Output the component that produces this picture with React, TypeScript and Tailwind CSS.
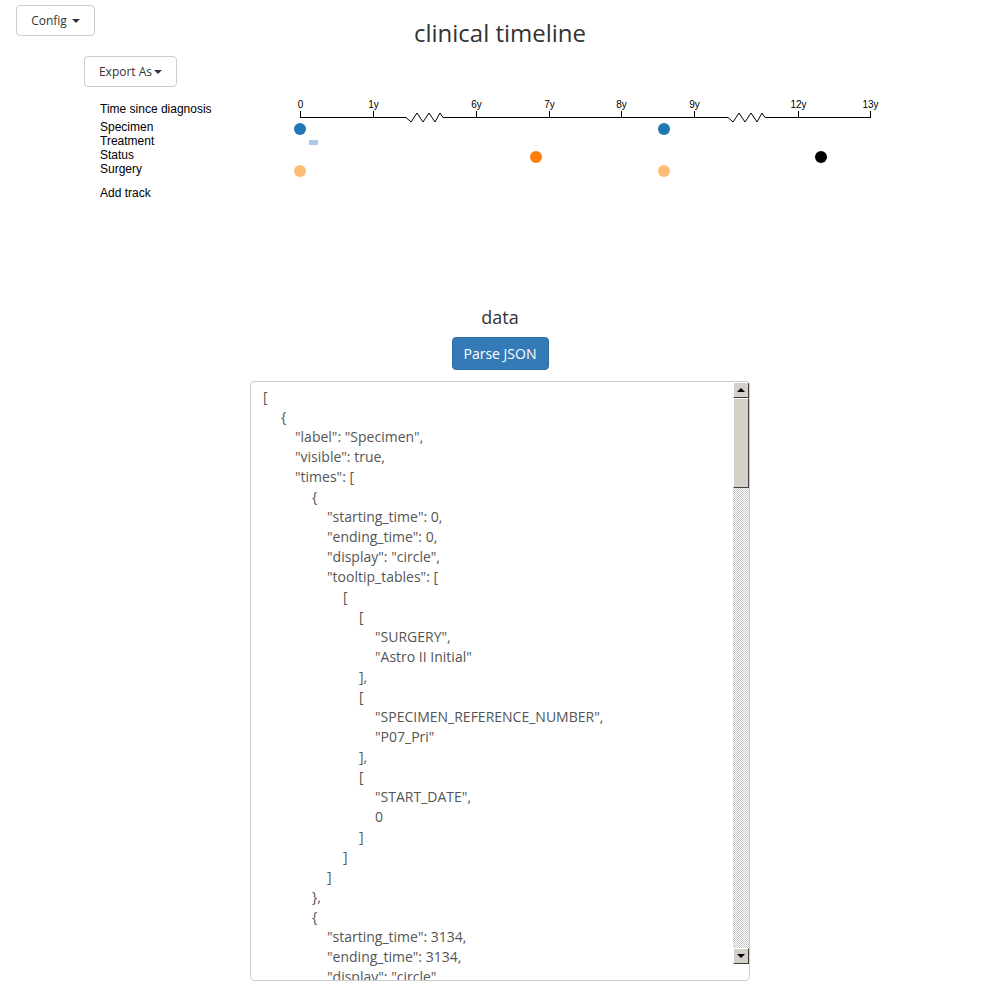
import React from "react";

const lines: [number, string][] = [
  [0, "["],
  [1, "{"],
  [2, '"label": "Specimen",'],
  [2, '"visible": true,'],
  [2, '"times": ['],
  [3, "{"],
  [4, '"starting_time": 0,'],
  [4, '"ending_time": 0,'],
  [4, '"display": "circle",'],
  [4, '"tooltip_tables": ['],
  [5, "["],
  [6, "["],
  [7, '"SURGERY",'],
  [7, '"Astro II Initial"'],
  [6, "],"],
  [6, "["],
  [7, '"SPECIMEN_REFERENCE_NUMBER",'],
  [7, '"P07_Pri"'],
  [6, "],"],
  [6, "["],
  [7, '"START_DATE",'],
  [7, "0"],
  [6, "]"],
  [5, "]"],
  [4, "]"],
  [3, "},"],
  [3, "{"],
  [4, '"starting_time": 3134,'],
  [4, '"ending_time": 3134,'],
  [4, '"display": "circle",'],
  [4, '"tooltip_tables": ['],
];

const indent = ["pl-0", "pl-[18px]", "pl-[32px]", "pl-[49px]", "pl-[64px]", "pl-[80px]", "pl-[96px]", "pl-[112px]"];

function Caret() {
  return <span className="inline-block w-0 h-0 border-x-4 border-x-transparent border-t-4 border-t-[#333] align-middle" />;
}

function zig(s: number) {
  const p = [
    [s, 27.5],
    [s + 5, 32],
    [s + 11, 23],
    [s + 17, 32],
    [s + 23, 23],
    [s + 29, 32],
    [s + 34, 23],
    [s + 37, 27.5],
  ];
  return p.map((q) => q.join(",")).join(" ");
}

function Timeline() {
  const ticks: [number, string][] = [
    [300, "0"],
    [373, "1y"],
    [476, "6y"],
    [549, "7y"],
    [621, "8y"],
    [694, "9y"],
    [798, "12y"],
    [870, "13y"],
  ];
  return (
    <svg width="1000" height="120" className="block" style={{ fontFamily: "'Liberation Sans', Arial, sans-serif" }}>
      <g fontSize="12" fill="#000">
        <text x="100" y="22.5">Time since diagnosis</text>
        <text x="100" y="40.5">Specimen</text>
        <text x="100" y="55">Treatment</text>
        <text x="100" y="69">Status</text>
        <text x="100" y="83">Surgery</text>
        <text x="100" y="107">Add track</text>
      </g>
      <g stroke="#000" strokeWidth="1" fill="none">
        <line x1="300" y1="27.5" x2="406" y2="27.5" />
        <line x1="443" y1="27.5" x2="728" y2="27.5" />
        <line x1="765" y1="27.5" x2="870.5" y2="27.5" />
        <polyline points={zig(406)} />
        <polyline points={zig(728)} />
        {ticks.map(([x]) => (
          <line key={x} x1={x + 0.5} y1="21" x2={x + 0.5} y2="28" />
        ))}
      </g>
      <g fontSize="10" fill="#000" textAnchor="middle">
        {ticks.map(([x, t]) => (
          <text key={t} x={x + 0.5} y="18">
            {t}
          </text>
        ))}
      </g>
      <circle cx="300" cy="39" r="6" fill="#1f77b4" />
      <circle cx="664" cy="39" r="6" fill="#1f77b4" />
      <rect x="309" y="50" width="9" height="5" fill="#aec7e8" />
      <circle cx="536" cy="67" r="6" fill="#ff7f0e" />
      <circle cx="821" cy="67" r="6" fill="#000" />
      <circle cx="300" cy="81" r="6" fill="#ffbb78" />
      <circle cx="664" cy="81" r="6" fill="#ffbb78" />
    </svg>
  );
}

function ScrollBtn({ up }: { up: boolean }) {
  return (
    <div className="h-[16px] w-full bg-[#d4d0c8] border-t border-l border-t-white border-l-white border-b border-r border-b-[#404040] border-r-[#404040] flex items-center justify-center">
      {up ? (
        <span className="w-0 h-0 border-x-[4px] border-x-transparent border-b-[4px] border-b-black" />
      ) : (
        <span className="w-0 h-0 border-x-[4px] border-x-transparent border-t-[4px] border-t-black" />
      )}
    </div>
  );
}

export default function App() {
  return (
    <div className="w-[1000px] h-[1000px] bg-white overflow-hidden text-[#333] font-['Open_Sans',sans-serif]">
      <div className="grid grid-cols-[1fr_auto_1fr] items-start">
        <div className="pl-4 pt-[5px]">
          <button className="h-[31px] w-[79px] border border-[#ccc] rounded-[4px] bg-white text-[12px] text-[#333] flex items-center justify-center gap-[5px] [font-stretch:90%]">
            <span>Config</span>
            <Caret />
          </button>
        </div>
        <h1 className="mt-[21px] text-[24px] leading-[24px] font-normal text-[#333]">clinical timeline</h1>
        <div />
      </div>
      <div className="pl-[84px] mt-[11px]">
        <button className="h-[31px] w-[93px] border border-[#ccc] rounded-[4px] bg-white text-[12px] text-[#333] flex items-center justify-center gap-[2px] [font-stretch:90%]">
          <span>Export As</span>
          <Caret />
        </button>
      </div>
      <div className="mt-[3px]">
        <Timeline />
      </div>
      <div className="mt-[98px] flex flex-col items-center">
        <div className="text-[18px] leading-[18px] text-[#333]">data</div>
        <button className="mt-[11px] h-[33px] w-[97px] bg-[#337ab7] border border-[#2e6da4] rounded-[4px] text-white text-[14px] flex items-center justify-center [font-stretch:90%]">
          Parse JSON
        </button>
        <div className="mt-[11px] relative w-[500px] h-[600px] border border-[#ccc] rounded-[4px] bg-white overflow-hidden">
          <div className="pt-[5px] pl-[12px] text-[14px] leading-[20px] text-[#555] whitespace-pre [font-stretch:90%]">
            {lines.map(([lv, t], i) => (
              <div key={i} className={indent[lv]}>
                {t}
              </div>
            ))}
          </div>
          <div className="absolute top-0 right-0 w-[16px] bottom-[16px] flex flex-col">
            <ScrollBtn up />
            <div className="h-[90px] bg-[#d4d0c8] border-t border-l border-t-white border-l-white border-b border-r border-b-[#404040] border-r-[#404040]" />
            <div className="flex-1 bg-[repeating-conic-gradient(#c8c8c8_0_25%,#ffffff_0_50%)] bg-[length:2px_2px]" />
            <ScrollBtn up={false} />
          </div>
        </div>
      </div>
    </div>
  );
}
